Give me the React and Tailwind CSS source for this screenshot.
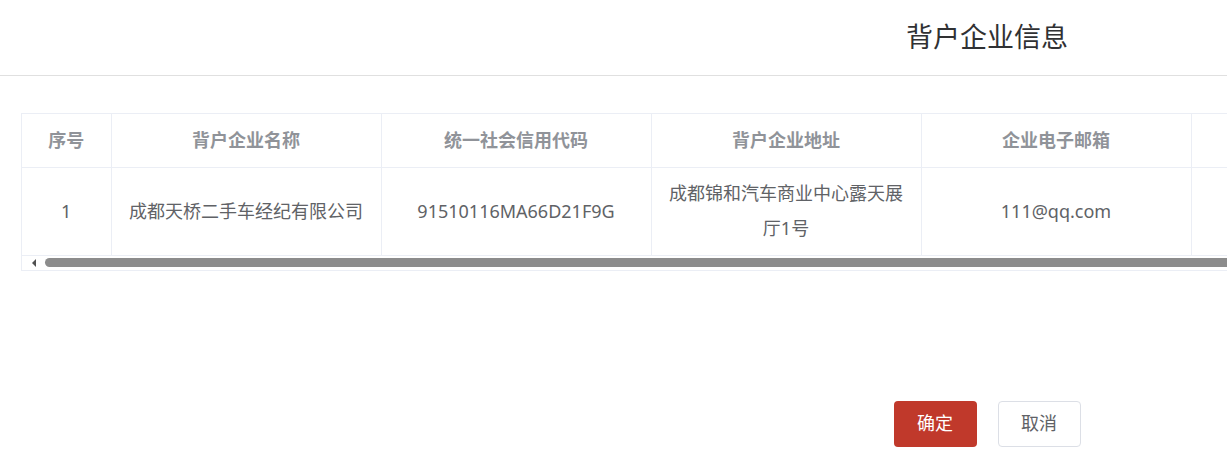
const columns = [
  { key: "idx", title: "序号", width: 89 },
  { key: "name", title: "背户企业名称", width: 270 },
  { key: "code", title: "统一社会信用代码", width: 270 },
  { key: "addr", title: "背户企业地址", width: 270 },
  { key: "email", title: "企业电子邮箱", width: 270 },
  { key: "phone", title: "", width: 270 },
  { key: "op", title: "", width: 492 },
];

const rows = [
  {
    idx: "1",
    name: "成都天桥二手车经纪有限公司",
    code: "91510116MA66D21F9G",
    addr: "成都锦和汽车商业中心露天展厅1号",
    email: "111@qq.com",
    phone: "",
    op: "",
  },
];

export default function App() {
  return (
    <div className="w-[1227px] h-[465px] overflow-hidden bg-white font-['Noto_Sans','Noto_Sans_CJK_SC',sans-serif]">
      <div className="w-[1974px]">
        <div className="h-[76px] flex items-center justify-center border-b border-[#e0e0e0]">
          <h1 className="text-[27px] leading-none text-[#303133] -mt-[3px]">背户企业信息</h1>
        </div>

        <div className="px-[21px] pt-[37px]">
          <div className="border-t border-l border-[#ebeef5]">
            <table className="table-fixed border-collapse w-[1931px]">
              <colgroup>
                {columns.map((c) => (
                  <col key={c.key} style={{ width: c.width }} />
                ))}
              </colgroup>
              <thead>
                <tr className="h-[53px]">
                  {columns.map((c) => (
                    <th key={c.key} className="border-r border-b border-[#ebeef5] px-[15px] text-[18px] font-bold text-[#909399] text-center align-middle">
                      {c.title}
                    </th>
                  ))}
                </tr>
              </thead>
              <tbody>
                {rows.map((r, i) => (
                  <tr key={i} className="h-[88px]">
                    {columns.map((c) => (
                      <td key={c.key} className="border-r border-b border-[#ebeef5] px-[15px] text-[18px] leading-[35px] text-[#606266] text-center align-middle">
                        {r[c.key]}
                      </td>
                    ))}
                  </tr>
                ))}
              </tbody>
            </table>

            <div className="h-[15px] flex items-center border-b border-[#ebeef5]">
              <div className="w-[23px] flex justify-end pr-[9px]">
                <div className="w-0 h-0 border-y-[4px] border-y-transparent border-r-[4px] border-r-[#505050]" />
              </div>
              <div className="flex-1 h-[9px] rounded-l-full bg-[#8c8c8c]" />
            </div>
          </div>
        </div>

        <div className="flex justify-center gap-[21px] pt-[130px]">
          <button className="w-[83px] h-[46px] rounded-[4px] bg-[#c0392b] text-white text-[18px]">确定</button>
          <button className="w-[83px] h-[46px] rounded-[4px] border border-[#dcdfe6] bg-white text-[#606266] text-[18px]">取消</button>
        </div>
      </div>
    </div>
  );
}
